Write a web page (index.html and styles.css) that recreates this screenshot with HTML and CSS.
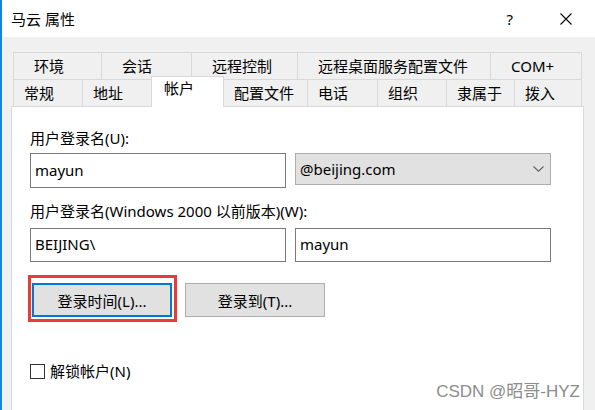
FILE: index.html
```html
<!DOCTYPE html>
<html lang="zh-CN">
<head>
    <meta charset="UTF-8">
    <title>马云 属性</title>
    <link rel="stylesheet" href="styles.css">
</head>
<body>

<div class="window">
    <!-- Barra de título -->
    <div class="titlebar">
        <span class="title">马云 属性</span>
        <span class="help">?</span>
        <span class="close">
            <svg width="12" height="12" viewBox="0 0 12 12"><path d="M0.5 0.5 L11.5 11.5 M11.5 0.5 L0.5 11.5" stroke="#000" stroke-width="1.1" fill="none"/></svg>
        </span>
    </div>

    <div class="dialog">
        <!-- Pestañas (dos filas) -->
        <div class="tabs">
            <div class="tab-row">
                <div class="tab back" style="width: 89px">环境</div>
                <div class="tab back" style="width: 91px">会话</div>
                <div class="tab back" style="width: 107px">远程控制</div>
                <div class="tab back" style="width: 194px">远程桌面服务配置文件</div>
                <div class="tab back" style="width: 92px">COM+</div>
            </div>
            <div class="tab-row">
                <div class="tab" style="width: 70px">常规</div>
                <div class="tab" style="width: 70px">地址</div>
                <div class="tab active" style="width: 73px">帐户</div>
                <div class="tab" style="width: 85px">配置文件</div>
                <div class="tab" style="width: 71px">电话</div>
                <div class="tab" style="width: 70px">组织</div>
                <div class="tab" style="width: 69px">隶属于</div>
                <div class="tab" style="width: 68px">拨入</div>
            </div>
        </div>

        <!-- Contenido de la pestaña Cuenta -->
        <div class="panel">
            <div class="label first">用户登录名(U):</div>
            <div class="field-row">
                <input class="textbox" type="text" value="mayun" readonly>
                <div class="combo">
                    <span>@beijing.com</span>
                    <svg width="11" height="6" viewBox="0 0 11 6"><path d="M0.5 0.5 L5.5 5.2 L10.5 0.5" stroke="#606060" stroke-width="1.1" fill="none"/></svg>
                </div>
            </div>

            <div class="label second">用户登录名(Windows 2000 以前版本)(W):</div>
            <div class="field-row row-old">
                <input class="textbox short" type="text" value="BEIJING\" readonly>
                <input class="textbox short" type="text" value="mayun" readonly>
            </div>

            <div class="button-row">
                <div class="highlight">
                    <button class="btn focused">登录时间(L)...</button>
                </div>
                <button class="btn second-btn">登录到(T)...</button>
            </div>

            <label class="check">
                <span class="box"></span>
                <span>解锁帐户(N)</span>
            </label>
        </div>
    </div>

    <div class="watermark">CSDN @昭哥-HYZ</div>
</div>

</body>
</html>
```

FILE: styles.css
```css
* {
    margin: 0;
    padding: 0;
    box-sizing: border-box;
}
body {
    font-family: "Noto Sans", "Noto Sans CJK SC", sans-serif;
    font-size: 15px;
    color: #000;
    background-color: #f0f0f0;
    width: 595px;
    height: 410px;
    overflow: hidden;
}
.window {
    position: relative;
    height: 410px;
    border-left: 2px solid #1883d7;
    background-color: #f0f0f0;
}
.titlebar {
    height: 37px;
    background-color: #fff;
    display: flex;
    align-items: center;
    padding-left: 9px;
}
.title {
    line-height: 20px;
}
.help {
    margin-left: auto;
    margin-right: 47px;
    font-size: 15px;
    line-height: 20px;
}
.close {
    display: flex;
    margin-right: 23px;
}
.tabs {
    margin-top: 15px;
    margin-left: 11px;
}
.tab-row {
    display: flex;
    height: 27px;
}
.tab {
    height: 27px;
    border: 1px solid #d9d9d9;
    border-bottom: none;
    margin-left: -1px;
    background-color: #f0f0f0;
    line-height: 26px;
    padding-left: 10px;
    white-space: nowrap;
}
.tab:first-child {
    margin-left: 0;
}
.tab.back {
    padding-left: 20px;
}
.tab.active {
    position: relative;
    z-index: 1;
    height: 31px;
    margin-top: -3px;
    background-color: #fff;
    line-height: 22px;
    padding-left: 12px;
}
.panel {
    margin-left: 9px;
    width: 573px;
    height: 320px;
    background-color: #fff;
    border: 1px solid #d9d9d9;
    padding: 21px 0 0 18px;
}
.label {
    line-height: 20px;
}
.label.second {
    margin-top: 13px;
}
.field-row {
    display: flex;
    align-items: flex-start;
    gap: 9px;
    margin-top: 5px;
}
.field-row.row-old {
    margin-top: 7px;
}
.textbox {
    width: 256px;
    height: 35px;
    border: 1px solid #7a7a7a;
    padding: 0 4px 2px;
    font-family: inherit;
    font-size: 15px;
    color: #000;
    background-color: #fff;
    outline: none;
}
.textbox.short {
    height: 34px;
}
.combo {
    width: 256px;
    height: 32px;
    background-color: #e1e1e1;
    border: 1px solid #adadad;
    display: flex;
    align-items: center;
    justify-content: space-between;
    padding: 0 6px 1px 4px;
}
.combo svg {
    margin-top: 1px;
}
.button-row {
    display: flex;
    align-items: flex-start;
    margin-top: 13px;
    margin-left: -2px;
}
.highlight {
    border: 3px solid #ec3a3a;
    padding: 5px 2px 2px 1px;
}
.btn {
    width: 140px;
    height: 34px;
    background-color: #e1e1e1;
    border: 1px solid #adadad;
    font-family: inherit;
    font-size: 15px;
    color: #000;
    cursor: pointer;
}
.btn.focused {
    border: 2px solid #0078d7;
}
.second-btn {
    margin-left: 8px;
    margin-top: 8px;
}
.check {
    display: flex;
    align-items: center;
    gap: 5px;
    margin-top: 39px;
    line-height: 20px;
}
.box {
    width: 15px;
    height: 15px;
    border: 1px solid #333;
    background-color: #fff;
}
/* Marca de agua sobre el diálogo */
.watermark {
    position: absolute;
    right: 15px;
    bottom: 7px;
    font-family: "Liberation Sans", "Noto Sans CJK SC", sans-serif;
    font-size: 17px;
    line-height: 22px;
    color: #8c8c8c;
}
```
